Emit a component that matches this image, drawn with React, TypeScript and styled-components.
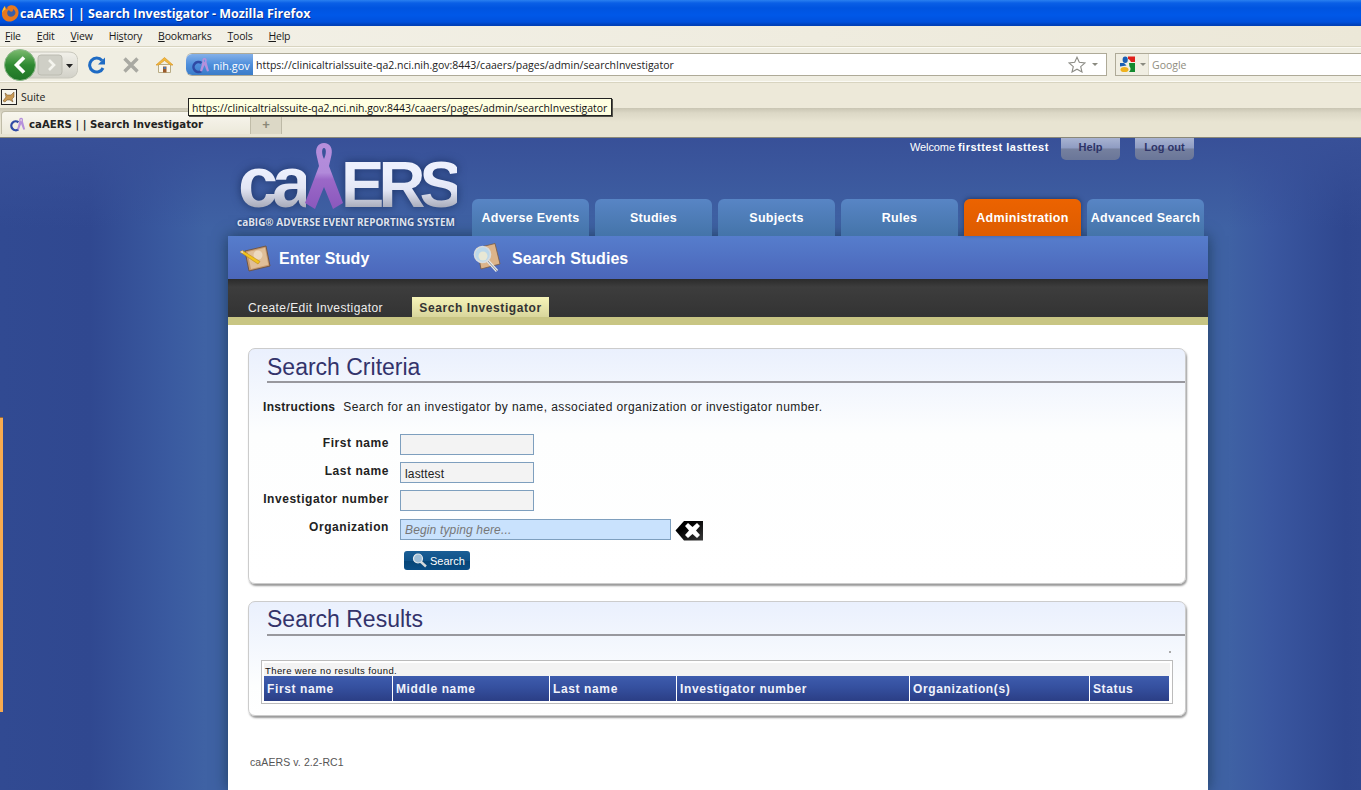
import React from "react";
import styled, { createGlobalStyle } from "styled-components";

const GlobalStyle = createGlobalStyle`
  html, body {
    margin: 0;
    padding: 0;
    height: 100%;
    overflow: hidden;
  }
  body {
    font-family: "Liberation Sans", Arial, sans-serif;
    background: #304890;
  }
  * {
    box-sizing: border-box;
  }
`;

const Screen = styled.div`
  width: 1361px;
  height: 790px;
  display: flex;
  flex-direction: column;
  position: relative;
  overflow: hidden;
`;

/* browser chrome */

const TitleBar = styled.div`
  height: 26px;
  flex: none;
  display: flex;
  align-items: center;
  padding-left: 1px;
  background: linear-gradient(
    180deg,
    #2a80f0 0,
    #0a5fe6 3px,
    #0054e0 8px,
    #0058e8 15px,
    #0050dc 22px,
    #0040b8 25px
  );
`;

const TitleText = styled.span`
  font-family: "Open Sans", sans-serif;
  font-weight: 700;
  font-size: 12.5px;
  letter-spacing: -0.02px;
  color: #fff;
  white-space: pre;
  text-shadow: 1px 1px 0 #0a2f90;
`;

const MenuBar = styled.div`
  height: 20px;
  flex: none;
  display: flex;
  align-items: center;
  padding-left: 5px;
  gap: 16px;
  background: linear-gradient(90deg, #f3f1e8 0, #efecdf 60%, #ece8d8 100%);
`;

const MenuItem = styled.span`
  font-family: "Open Sans", sans-serif;
  font-size: 10.5px;
  letter-spacing: -0.22px;
  color: #1a1a1a;
  u {
    text-underline-offset: 1px;
  }
`;

const NavBar = styled.div`
  height: 37px;
  flex: none;
  display: flex;
  align-items: center;
  padding: 0 0 0 2px;
  border-top: 1px solid #d8d4c0;
  border-bottom: 1px solid #d8d4c0;
  box-shadow: inset 0 1px 0 #fbfaf4, inset 0 -1px 0 #fbfaf4;
  background: #f0eee2;
`;

const BackGroup = styled.div`
  width: 76px;
  height: 30px;
  flex: none;
  display: flex;
  align-items: center;
  justify-content: center;
`;

const NavIcon = styled.div<{ $ml?: number }>`
  flex: none;
  display: flex;
  margin-left: ${(p) => p.$ml ?? 0}px;
`;

const UrlBox = styled.div`
  width: 921px;
  height: 23px;
  margin-left: 12px;
  flex: none;
  display: flex;
  align-items: center;
  background: #fff;
  border: 1px solid #aeaa98;
  border-left: none;
  border-radius: 6px 0 0 6px;
`;

const SiteBadge = styled.div`
  width: 67px;
  height: 21px;
  flex: none;
  display: flex;
  align-items: center;
  gap: 3px;
  padding: 1px 0 0 6px;
  color: #fff;
  font-family: "Open Sans", sans-serif;
  font-size: 10.8px;
  border-radius: 6px 0 0 6px;
  background: linear-gradient(180deg, #84b0e8 0, #4f8fdc 50%, #3a7cc8 100%);
`;

const UrlText = styled.span`
  margin-left: 3px;
  padding-top: 1px;
  flex: 1;
  font-family: "Open Sans", sans-serif;
  font-size: 10.5px;
  color: #222;
  white-space: nowrap;
`;

const UrlTail = styled.div`
  width: 38px;
  flex: none;
  display: flex;
  align-items: center;
  gap: 6px;
`;

const SmallCaret = styled.span`
  width: 0;
  height: 0;
  border-left: 3px solid transparent;
  border-right: 3px solid transparent;
  border-top: 3px solid #8a8a80;
`;

const SearchBox = styled.div`
  margin-left: 8px;
  flex: 1;
  height: 23px;
  display: flex;
  align-items: center;
  background: #fff;
  border: 1px solid #aeaa98;
  border-right: none;
`;

const EngineButton = styled.div`
  width: 33px;
  height: 21px;
  flex: none;
  display: flex;
  align-items: center;
  gap: 4px;
  padding-left: 3px;
  background: #f0eee2;
  border-right: 1px solid #dcd9c8;
`;

const SearchHint = styled.span`
  margin-left: 3px;
  padding-top: 1px;
  font-family: "Open Sans", sans-serif;
  font-size: 10.5px;
  color: #8f8d80;
`;

const BookmarksBar = styled.div`
  height: 25px;
  flex: none;
  display: flex;
  align-items: center;
  padding: 2px 0 0 1px;
  gap: 4px;
  background: #ede9d9;
`;

const BookmarkLabel = styled.span`
  font-family: "Open Sans", sans-serif;
  font-size: 10.5px;
  color: #222;
`;

const TabStrip = styled.div`
  height: 30px;
  flex: none;
  display: flex;
  align-items: flex-end;
  padding: 4px 0 3px 1px;
  border-bottom: 1px solid #8a8878;
  background: linear-gradient(180deg, #c9c5b3 0, #dcd8c6 5px, #e8e4d2 14px, #e8e4d2 100%);
`;

const BrowserTab = styled.div`
  width: 250px;
  height: 23px;
  flex: none;
  display: flex;
  align-items: center;
  gap: 3px;
  padding: 1px 0 0 8px;
  border: 1px solid #c0bca8;
  border-bottom: none;
  border-radius: 4px 4px 0 0;
  background: linear-gradient(180deg, #f8f6ee, #ece9da);
`;

const TabTitle = styled.span`
  padding-top: 1px;
  font-family: "DejaVu Sans", sans-serif;
  font-weight: 700;
  font-size: 10.2px;
  color: #222;
  white-space: pre;
`;

const NewTab = styled.div`
  width: 31px;
  height: 20px;
  flex: none;
  display: flex;
  align-items: center;
  justify-content: center;
  color: #8a8878;
  font-size: 13px;
  font-weight: 700;
  border-right: 1px solid #bdb9a6;
  border-top: 1px solid #c8c4b0;
  background: #dcd8c6;
`;

const UrlTooltip = styled.div`
  position: absolute;
  left: 188px;
  top: 98px;
  height: 18px;
  padding: 1px 4px 0 3px;
  display: flex;
  align-items: center;
  font-family: "Open Sans", sans-serif;
  font-size: 10.45px;
  color: #111;
  background: #ffffe1;
  border: 1px solid #222;
  box-shadow: 1px 1px 0 #55544c;
  white-space: nowrap;
`;

const ThinMarker = styled.div`
  position: absolute;
  left: 0;
  top: 417px;
  width: 3px;
  height: 295px;
  background: #f7ab4f;
  border-top: 1px solid #96683a;
`;

/* page */

const Page = styled.div`
  flex: 1;
  min-height: 0;
  display: flex;
  padding-left: 228px;
  background:
    linear-gradient(180deg, rgba(56, 80, 152, 1) 0, rgba(56, 80, 152, 0) 90px),
    linear-gradient(
      90deg,
      #314a92 0,
      #304890 90px,
      #3a5aa0 170px,
      #3f62a4 205px,
      #3f62a4 1228px,
      #3a57a0 1270px,
      #2f478f 1345px,
      #304890 100%
    );
`;

const Column = styled.div`
  width: 980px;
  flex: none;
  display: flex;
  flex-direction: column;
`;

const Masthead = styled.div`
  height: 98px;
  flex: none;
  position: relative;
  display: flex;
  align-items: flex-end;
  padding-left: 244px;
  gap: 6px;
`;

const LogoBlock = styled.div`
  position: absolute;
  left: 9px;
  top: 4px;
  width: 224px;
  height: 92px;
`;

const LogoWord = styled.div`
  display: flex;
  align-items: baseline;
  height: 72px;
  padding: 9px 0 0 1px;
  font-family: "Liberation Sans", sans-serif;
  font-weight: 700;
  filter: drop-shadow(0 0 5px rgba(15, 35, 80, 0.7));
`;

const LogoLetters = styled.span<{ $size: number; $spacing: number; $ml?: number }>`
  font-size: ${(p) => p.$size}px;
  line-height: ${(p) => Math.round(p.$size * 0.86)}px;
  letter-spacing: ${(p) => p.$spacing}px;
  margin-left: ${(p) => p.$ml ?? 0}px;
  background: linear-gradient(180deg, #edf0fd 30%, #e2e5f4 60%, #a9acbb 90%);
  -webkit-background-clip: text;
  background-clip: text;
  color: transparent;
`;

const LogoRibbon = styled.svg`
  position: absolute;
  left: 68px;
  top: 1px;
`;

const LogoTagline = styled.div`
  margin-top: 1px;
  font-family: "Open Sans", sans-serif;
  font-weight: 700;
  font-size: 9.95px;
  letter-spacing: 0.02px;
  white-space: nowrap;
  color: #dfe3ee;
  text-shadow: 0 0 3px rgba(15, 35, 80, 0.8);
`;

const UserStrip = styled.div`
  position: absolute;
  top: 0;
  left: 682px;
  display: flex;
  align-items: flex-start;
`;

const Welcome = styled.div`
  width: 151px;
  padding-top: 3px;
  font-size: 11px;
  letter-spacing: -0.1px;
  color: #fff;
  white-space: nowrap;
  b {
    letter-spacing: 0.5px;
  }
`;

const TopButton = styled.div`
  width: 59px;
  height: 22px;
  margin-right: 15px;
  padding-bottom: 5px;
  display: flex;
  align-items: center;
  justify-content: center;
  font-size: 11px;
  font-weight: 700;
  color: #2e3468;
  border-radius: 0 0 5px 5px;
  background: linear-gradient(180deg, #a8b3d2 0, #8f9cc2 45%, #75809f 50%, #6a7698 100%);
`;

const MainTab = styled.div<{ $active?: boolean }>`
  width: 117px;
  height: 37px;
  flex: none;
  display: flex;
  align-items: center;
  justify-content: center;
  white-space: nowrap;
  font-size: 12.5px;
  font-weight: 700;
  letter-spacing: 0.3px;
  color: #fff;
  border-radius: 6px 6px 0 0;
  background: ${(p) =>
    p.$active
      ? "linear-gradient(180deg, #ec6300, #dd5c00)"
      : "linear-gradient(180deg, #5885c5, #4474a9)"};
  box-shadow: ${(p) => (p.$active ? "0 -1px 4px rgba(20, 40, 80, 0.6)" : "none")};
`;

const ColumnBody = styled.div`
  flex: 1;
  display: flex;
  flex-direction: column;
  box-shadow: 0 0 14px rgba(20, 50, 70, 0.75);
`;

const SubNav = styled.div`
  height: 43px;
  flex: none;
  display: flex;
  align-items: center;
  padding-top: 1px;
  background: linear-gradient(180deg, #567dcc, #4b66ba);
`;

const SubNavLink = styled.div<{ $width: number; $gap: number }>`
  width: ${(p) => p.$width}px;
  flex: none;
  display: flex;
  align-items: center;
  padding-left: 11px;
  gap: ${(p) => p.$gap}px;
  font-size: 16px;
  line-height: 20px;
  font-weight: 700;
  letter-spacing: 0.05px;
  color: #fff;
`;

const SubNavText = styled.span`
  padding-top: 1px;
`;

const DarkBar = styled.div`
  height: 38px;
  flex: none;
  display: flex;
  align-items: flex-end;
  padding-left: 20px;
  background: linear-gradient(180deg, #2b2b2b 0, #3d3d3d 8px, #333 100%);
`;

const SecondaryTab = styled.div<{ $active?: boolean }>`
  height: 20px;
  flex: none;
  display: flex;
  align-items: center;
  justify-content: ${(p) => (p.$active ? "center" : "flex-start")};
  width: ${(p) => (p.$active ? 137 : 164)}px;
  padding-top: 1px;
  font-size: 12px;
  letter-spacing: ${(p) => (p.$active ? 0.58 : 0.4)}px;
  font-weight: ${(p) => (p.$active ? 700 : 400)};
  color: ${(p) => (p.$active ? "#333" : "#eee")};
  background: ${(p) =>
    p.$active ? "linear-gradient(180deg, #f6f4b8, #d9d69c)" : "transparent"};
`;

const TanStrip = styled.div`
  height: 8px;
  flex: none;
  background: #c8c583;
`;

const Content = styled.div`
  flex: 1;
  display: flex;
  flex-direction: column;
  padding: 23px 22px 0 20px;
  background: #fff;
`;

const Card = styled.section<{ $height: number; $mb: number }>`
  height: ${(p) => p.$height}px;
  margin-bottom: ${(p) => p.$mb}px;
  flex: none;
  position: relative;
  padding: 1px 0 0 0;
  border: 1px solid #ccc;
  border-radius: 7px;
  box-shadow: 1px 2px 2px #999;
  background: linear-gradient(180deg, #eaf0fd 0, #fdfefe 85px, #fff 100%);
`;

const CardHeading = styled.h2<{ $top: number }>`
  margin: 0 0 0 18px;
  height: 33px;
  padding: ${(p) => p.$top}px 0 0 0;
  font-size: 23px;
  line-height: 30px;
  font-weight: 400;
  color: #33336b;
  border-bottom: 2px solid #98989e;
`;

const Instructions = styled.div`
  margin: 17px 0 0 14px;
  font-size: 12px;
  letter-spacing: 0.42px;
  color: #222;
  b {
    margin-right: 8px;
    letter-spacing: 0.3px;
  }
`;

const FormGrid = styled.div`
  margin-top: 20px;
  display: grid;
  grid-template-columns: 140px 1fr;
  grid-auto-rows: 28px;
  column-gap: 11px;
`;

const FieldLabel = styled.label`
  padding-top: 2px;
  text-align: right;
  font-size: 12px;
  font-weight: 700;
  letter-spacing: 0.55px;
  color: #222;
  white-space: nowrap;
`;

const FieldRow = styled.div`
  display: flex;
  align-items: flex-start;
`;

const TextInput = styled.input<{ $wide?: boolean }>`
  width: ${(p) => (p.$wide ? 271 : 134)}px;
  height: 21px;
  margin-top: ${(p) => (p.$wide ? 1 : 0)}px;
  padding: ${(p) => (p.$wide ? 1 : 2)}px 3px 0 4px;
  font-family: "Liberation Sans", sans-serif;
  font-size: 12px;
  letter-spacing: 0.15px;
  color: #222;
  outline: none;
  border: 1px solid #7e9fbe;
  background: ${(p) => (p.$wide ? "#c9e2fd" : "#f3f3f3")};
  &::placeholder {
    color: #777;
    font-style: italic;
    opacity: 1;
  }
`;

const ClearWrap = styled.div`
  margin: 2px 0 0 4px;
  flex: none;
  display: flex;
`;

const SearchButton = styled.button`
  margin: 5px 0 0 155px;
  width: 66px;
  height: 19px;
  padding: 0 0 0 8px;
  display: flex;
  align-items: center;
  gap: 2px;
  font-family: "Liberation Sans", sans-serif;
  font-size: 11px;
  color: #fff;
  border: none;
  border-radius: 3px;
  background: linear-gradient(180deg, #1a5e96 0, #0f5289 50%, #064577 52%, #0a4e86 100%);
`;

const Dot = styled.div`
  position: absolute;
  top: 49px;
  right: 14px;
  width: 2px;
  height: 2px;
  background: #aaa;
`;

const ResultsFrame = styled.div`
  margin: 24px 0 0 12px;
  width: 912px;
  height: 44px;
  padding: 2px;
  border: 1px solid #bbb;
  background: #fff;
`;

const NoResults = styled.div`
  height: 13px;
  padding: 2px 0 0 1px;
  font-size: 9.5px;
  line-height: 11px;
  letter-spacing: 0.4px;
  color: #111;
  background: #f3f3f3;
`;

const ResultsTable = styled.div`
  display: grid;
  grid-template-columns: 129px 157px 127px 233px 180px 79px;
  height: 25px;
`;

const HeaderCell = styled.div`
  display: flex;
  align-items: center;
  padding: 1px 0 0 3px;
  font-size: 12px;
  font-weight: 700;
  letter-spacing: 0.62px;
  color: #f0f2fb;
  border-right: 1px solid #fff;
  background: linear-gradient(180deg, #3e5cad 0, #35509f 45%, #2b3e85 100%);
  &:last-child {
    border-right: none;
  }
`;

const VersionNote = styled.div`
  margin: 40px 0 0 2px;
  font-size: 10.5px;
  letter-spacing: 0.1px;
  color: #555;
`;

const FirefoxIcon = () => (
  <svg width="19" height="20" viewBox="0 0 19 20">
    <circle cx="10" cy="10" r="7.5" fill="#3b5fa8" />
    <path d="M9 2.5 C13 1 18 5 17.5 10 C17 16 12 19 7.5 18.5 C3 18 .5 14 1 9.5 C1.5 6 3 4 4 3 C4 5 5 6 6.5 6 C5.5 4.5 7 3 9 2.5Z M8 7 C6 8 5.5 11 7.5 13 C10 15 14 13 14.5 10 C14.5 8 13 6.5 12 6 C12.5 8 11 9 9.5 8.5 C8.8 8.2 8.3 7.8 8 7Z" fill="#e8781e" fillRule="evenodd" />
    <path d="M4 3 C2.5 5 1 7.5 1 10 C2 8 3 7 4.5 6.5Z" fill="#f6c23e" />
  </svg>
);

const BackForward = () => (
  <svg width="76" height="32" viewBox="0 0 76 32">
    <defs>
      <linearGradient id="ffGreen" x1="0" y1="0" x2="0" y2="1">
        <stop offset="0" stopColor="#7dbb70" />
        <stop offset="0.5" stopColor="#2f8a32" />
        <stop offset="1" stopColor="#1e7426" />
      </linearGradient>
      <linearGradient id="ffGrey" x1="0" y1="0" x2="0" y2="1">
        <stop offset="0" stopColor="#f2f1ea" />
        <stop offset="1" stopColor="#d2d1c8" />
      </linearGradient>
    </defs>
    <path d="M18 3 H66 C75 3 76 8 76 16 C76 24 74 29 66 29 H18Z" fill="url(#ffGrey)" stroke="#c9c8bd" />
    <rect x="36" y="6" width="24" height="20" rx="3" fill="#cfcfc6" stroke="#bcbcb2" />
    <path d="M47 11 L52 16 L47 21" fill="none" stroke="#f4f4ee" strokeWidth="2.6" />
    <path d="M64 15 H71 L67.5 19Z" fill="#222" />
    <circle cx="18" cy="16" r="15.5" fill="url(#ffGreen)" stroke="#8db88a" />
    <path d="M22 8.5 L14.5 16 L22 23.5" fill="none" stroke="#fff" strokeWidth="3.6" />
  </svg>
);

const ReloadIcon = () => (
  <svg width="18" height="18" viewBox="0 0 18 18">
    <path d="M14 4.5 A7 7 0 1 0 15 12" fill="none" stroke="#1e6bc4" strokeWidth="3" />
    <path d="M10 8.5 H17 V1.5Z" fill="#1e6bc4" />
  </svg>
);

const StopIcon = () => (
  <svg width="18" height="18" viewBox="0 0 18 18">
    <path d="M2.5 2.5 L15.5 15.5 M15.5 2.5 L2.5 15.5" stroke="#a9a9a2" strokeWidth="3.4" />
  </svg>
);

const HomeIcon = () => (
  <svg width="19" height="18" viewBox="0 0 19 18">
    <path d="M3.5 8.5 V16.5 H15.5 V8.5Z" fill="#faf6ea" stroke="#b9ac85" />
    <path d="M1 9 L9.5 1.5 L18 9 L15.5 9 L9.5 4.5 L3.5 9Z" fill="#f3b83a" stroke="#d8962a" strokeWidth="0.7" />
    <rect x="8" y="10.5" width="3.5" height="6" fill="#9a5a2a" />
    <rect x="8.6" y="11" width="2.2" height="2" fill="#4a7cc0" />
  </svg>
);

const SiteIcon = ({ size = 18 }: { size?: number }) => (
  <svg width={size} height={size} viewBox="0 0 18 18">
    <path d="M9.5 7 A5 5 0 1 0 9.5 15" fill="none" stroke="#2f4aa5" strokeWidth="2.6" />
    <path d="M12.5 2 C10.5 2 10 4 10.5 6 L8 15 L10 15.5 L12.5 9 L15 15.5 L17 15 L14.5 6 C15 4 14.5 2 12.5 2Z M12.5 3.4 C13.4 3.4 13.4 5 12.5 6.3 C11.6 5 11.6 3.4 12.5 3.4Z" fill="#b590dc" fillRule="evenodd" />
  </svg>
);

const StarIcon = () => (
  <svg width="18" height="17" viewBox="0 0 18 17">
    <path d="M9 1.2 L11.3 6.3 L17 6.9 L12.7 10.6 L14 16 L9 13.2 L4 16 L5.3 10.6 L1 6.9 L6.7 6.3Z" fill="#fff" stroke="#8c8c86" strokeWidth="1.1" />
  </svg>
);

const GoogleIcon = () => (
  <svg width="17" height="17" viewBox="0 0 17 17">
    <ellipse cx="6.2" cy="3.8" rx="2.6" ry="3.2" fill="#1a5fb4" />
    <path d="M9 0.5 H16 V6 L12 6 C11 4 10 3 9 3Z" fill="#e0201c" />
    <path d="M10 7 H16 V16 H10 C12 14 12 12 10.5 10.5Z" fill="#128a2e" />
    <path d="M1 7 H5 L7.5 9.5 L1 10.5Z" fill="#1a5fb4" />
    <ellipse cx="5.5" cy="13.5" rx="4" ry="2.6" fill="#efb21f" />
  </svg>
);

const TomcatIcon = () => (
  <svg width="16" height="16" viewBox="0 0 16 16">
    <rect x="0.5" y="0.5" width="15" height="15" fill="#f7f5ec" stroke="#222" />
    <path d="M2 12 L5 8 L4 4 L6.5 6 L10 6 L13 3 L13 8 L11 10 L12 13 L9 11 L6 11 L4 13Z" fill="#c99a54" stroke="#6a4a20" strokeWidth="0.5" />
  </svg>
);

const PencilBookIcon = () => (
  <svg width="32" height="28" viewBox="0 0 32 28">
    <path d="M6 7 L27 2 L31 22 L10 27Z" fill="#c79a6e" stroke="#6d5240" strokeWidth="0.9" />
    <path d="M8.5 8 L26 3.8 L29.3 20.8 L12 25Z" fill="#e0bf98" />
    <circle cx="19" cy="11" r="4.5" fill="#f2e4d0" opacity="0.7" />
    <path d="M1 8 L3.5 6.5 L21 17.5 L19 20Z" fill="#f2c41e" stroke="#b07c10" strokeWidth="0.5" />
    <path d="M1 8 L3.5 6.5 L4.5 9.5Z" fill="#e8d4b8" />
  </svg>
);

const GlassBookIcon = () => (
  <svg width="29" height="30" viewBox="0 0 29 30">
    <path d="M5 5 L23 0.5 L28 21 L9 26Z" fill="#dcb48a" stroke="#7a5a42" strokeWidth="0.8" />
    <path d="M15 17 L25 28" stroke="#e6e8ea" strokeWidth="3.2" />
    <path d="M15 17 L25 28" stroke="#8c9298" strokeWidth="1" />
    <circle cx="10.5" cy="11.5" r="8" fill="#bcd8ea" stroke="#d8dcde" strokeWidth="1.6" />
    <circle cx="11" cy="13" r="4.5" fill="#f2ecd0" opacity="0.8" />
  </svg>
);

const LogoRibbonArt = () => (
  <>
    <defs>
      <linearGradient id="ribbonFill" x1="0" y1="0" x2="0" y2="1">
        <stop offset="0" stopColor="#b68fdc" />
        <stop offset="0.45" stopColor="#b18ada" />
        <stop offset="0.55" stopColor="#9b68c8" />
        <stop offset="1" stopColor="#8a58bc" />
      </linearGradient>
    </defs>
    <path d="M19 0 C13 0 10 5 11.5 12 L14 23 L0 60 L10 66 L19 44 L28 66 L38 60 L24 23 L26.5 12 C28 5 25 0 19 0Z M19 5 C21.5 5 21.5 11 19 16 C16.5 11 16.5 5 19 5Z" fill="url(#ribbonFill)" fillRule="evenodd" />
  </>
);

const ClearBackIcon = () => (
  <svg width="28" height="21" viewBox="0 0 28 21">
    <defs>
      <linearGradient id="clearFade" x1="0" y1="0" x2="1" y2="1">
        <stop offset="0.35" stopColor="#000" />
        <stop offset="1" stopColor="#3a3a3a" />
      </linearGradient>
    </defs>
    <path d="M0.5 10.5 L9 1 H28 V20.5 H9Z" fill="url(#clearFade)" />
    <path d="M10 6 L13 3 L17.5 7 L22 3 L25 6 L21 10.5 L25 15 L22 18 L17.5 14 L13 18 L10 15 L14 10.5Z" fill="#fff" />
  </svg>
);

const GlassIcon = () => (
  <svg width="16" height="15" viewBox="0 0 16 15">
    <path d="M8 8 L14 13.5" stroke="#d5d8da" strokeWidth="2.4" />
    <circle cx="6" cy="5.5" r="4.5" fill="#9ebed8" stroke="#e4e8ea" strokeWidth="1.2" />
  </svg>
);

const App: React.FC = () => (
  <Screen>
    <GlobalStyle />
    <TitleBar>
      <FirefoxIcon />
      <TitleText>caAERS | | Search Investigator - Mozilla Firefox</TitleText>
    </TitleBar>
    <MenuBar>
      <MenuItem><u>F</u>ile</MenuItem>
      <MenuItem><u>E</u>dit</MenuItem>
      <MenuItem><u>V</u>iew</MenuItem>
      <MenuItem>Hi<u>s</u>tory</MenuItem>
      <MenuItem><u>B</u>ookmarks</MenuItem>
      <MenuItem><u>T</u>ools</MenuItem>
      <MenuItem><u>H</u>elp</MenuItem>
    </MenuBar>
    <NavBar>
      <BackGroup><BackForward /></BackGroup>
      <NavIcon $ml={10}><ReloadIcon /></NavIcon>
      <NavIcon $ml={16}><StopIcon /></NavIcon>
      <NavIcon $ml={15}><HomeIcon /></NavIcon>
      <UrlBox>
        <SiteBadge>
          <SiteIcon />
          nih.gov
        </SiteBadge>
        <UrlText>https://clinicaltrialssuite-qa2.nci.nih.gov:8443/caaers/pages/admin/searchInvestigator</UrlText>
        <UrlTail>
          <StarIcon />
          <SmallCaret />
        </UrlTail>
      </UrlBox>
      <SearchBox>
        <EngineButton>
          <GoogleIcon />
          <SmallCaret />
        </EngineButton>
        <SearchHint>Google</SearchHint>
      </SearchBox>
    </NavBar>
    <BookmarksBar>
      <TomcatIcon />
      <BookmarkLabel>Suite</BookmarkLabel>
    </BookmarksBar>
    <TabStrip>
      <BrowserTab>
        <SiteIcon size={16} />
        <TabTitle>caAERS | | Search Investigator</TabTitle>
      </BrowserTab>
      <NewTab>+</NewTab>
    </TabStrip>
    <UrlTooltip>https://clinicaltrialssuite-qa2.nci.nih.gov:8443/caaers/pages/admin/searchInvestigator</UrlTooltip>
    <Page>
      <Column>
        <Masthead>
          <LogoBlock>
            <LogoWord>
              <LogoLetters $size={72} $spacing={-6}>ca</LogoLetters>
              <LogoLetters $size={65} $spacing={-6} $ml={35}>ERS</LogoLetters>
            </LogoWord>
            <LogoRibbon width="38" height="67" viewBox="0 0 38 67">
              <LogoRibbonArt />
            </LogoRibbon>
            <LogoTagline>caBIG® ADVERSE EVENT REPORTING SYSTEM</LogoTagline>
          </LogoBlock>
          <UserStrip>
            <Welcome>Welcome <b>firsttest lasttest</b></Welcome>
            <TopButton>Help</TopButton>
            <TopButton>Log out</TopButton>
          </UserStrip>
          <MainTab>Adverse Events</MainTab>
          <MainTab>Studies</MainTab>
          <MainTab>Subjects</MainTab>
          <MainTab>Rules</MainTab>
          <MainTab $active>Administration</MainTab>
          <MainTab>Advanced Search</MainTab>
        </Masthead>
        <ColumnBody>
          <SubNav>
            <SubNavLink $width={233} $gap={8}><PencilBookIcon /><SubNavText>Enter Study</SubNavText></SubNavLink>
            <SubNavLink $width={300} $gap={11}><GlassBookIcon /><SubNavText>Search Studies</SubNavText></SubNavLink>
          </SubNav>
          <DarkBar>
            <SecondaryTab>Create/Edit Investigator</SecondaryTab>
            <SecondaryTab $active>Search Investigator</SecondaryTab>
          </DarkBar>
          <TanStrip />
          <Content>
            <Card $height={236} $mb={17}>
              <CardHeading $top={2}>Search Criteria</CardHeading>
              <Instructions>
                <b>Instructions</b>Search for an investigator by name, associated organization or investigator number.
              </Instructions>
              <FormGrid>
                <FieldLabel>First name</FieldLabel>
                <FieldRow><TextInput /></FieldRow>
                <FieldLabel>Last name</FieldLabel>
                <FieldRow><TextInput defaultValue="lasttest" /></FieldRow>
                <FieldLabel>Investigator number</FieldLabel>
                <FieldRow><TextInput /></FieldRow>
                <FieldLabel>Organization</FieldLabel>
                <FieldRow>
                  <TextInput $wide placeholder="Begin typing here..." />
                  <ClearWrap><ClearBackIcon /></ClearWrap>
                </FieldRow>
              </FormGrid>
              <SearchButton><GlassIcon />Search</SearchButton>
            </Card>
            <Card $height={115} $mb={0}>
              <CardHeading $top={1}>Search Results</CardHeading>
              <Dot />
              <ResultsFrame>
                <NoResults>There were no results found.</NoResults>
                <ResultsTable>
                  <HeaderCell>First name</HeaderCell>
                  <HeaderCell>Middle name</HeaderCell>
                  <HeaderCell>Last name</HeaderCell>
                  <HeaderCell>Investigator number</HeaderCell>
                  <HeaderCell>Organization(s)</HeaderCell>
                  <HeaderCell>Status</HeaderCell>
                </ResultsTable>
              </ResultsFrame>
            </Card>
            <VersionNote>caAERS v. 2.2-RC1</VersionNote>
          </Content>
        </ColumnBody>
      </Column>
    </Page>
    <ThinMarker />
  </Screen>
);

export default App;
